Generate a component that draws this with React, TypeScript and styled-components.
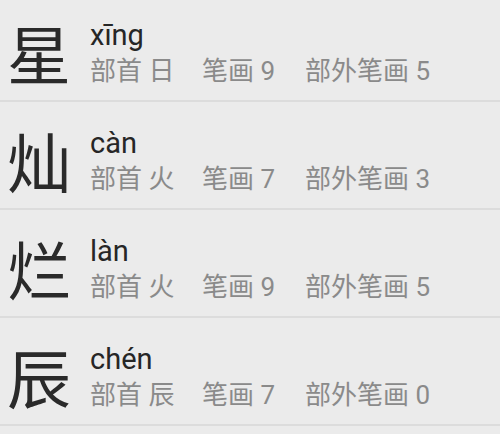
import React from "react";
import styled, { createGlobalStyle } from "styled-components";

const Global = createGlobalStyle`
  html, body { margin: 0; padding: 0; background: #ebebeb; }
  body { width: 500px; height: 434px; overflow: hidden; }
`;

const Viewport = styled.div`
  width: 500px;
  height: 434px;
  overflow: hidden;
  background: #ebebeb;
`;

const List = styled.ul`
  list-style: none;
  margin: -6px 0 0 0;
  padding: 0;
`;

const Row = styled.li`
  box-sizing: border-box;
  height: 108px;
  display: flex;
  align-items: flex-start;
  padding: 21px 0 0 7px;
  border-bottom: 2px solid #dcdcdc;
`;

const BigChar = styled.div`
  font-family: "Noto Sans CJK SC", sans-serif;
  font-size: 64px;
  line-height: 64px;
  height: 64px;
  margin-top: 4px;
  color: #2a2a2a;
  width: 83px;
  flex: none;
`;

const Info = styled.div`
  display: flex;
  flex-direction: column;
  gap: 4px;
  margin-top: 3px;
`;

const Pinyin = styled.div`
  font-family: Roboto, "Noto Sans", sans-serif;
  font-size: 29px;
  line-height: 34px;
  height: 34px;
  color: #262626;
`;

const Meta = styled.div`
  display: flex;
  font-size: 26px;
  line-height: 30px;
  height: 30px;
  color: #8a8a8a;
`;

const MetaItem = styled.span<{ $w: number }>`
  width: ${(p) => p.$w}px;
  flex: none;
  white-space: nowrap;
  font-family: Roboto, "Noto Sans CJK SC", sans-serif;
`;

const rows = [
  { ch: "星", py: "xīng", rad: "日", strokes: 9, extra: 5 },
  { ch: "灿", py: "càn", rad: "火", strokes: 7, extra: 3 },
  { ch: "烂", py: "làn", rad: "火", strokes: 9, extra: 5 },
  { ch: "辰", py: "chén", rad: "辰", strokes: 7, extra: 0 },
];

export default function App() {
  return (
    <Viewport>
      <Global />
      <List>
        {rows.map((r) => (
          <Row key={r.ch}>
            <BigChar>{r.ch}</BigChar>
            <Info>
              <Pinyin>{r.py}</Pinyin>
              <Meta>
                <MetaItem $w={112}>部首 {r.rad}</MetaItem>
                <MetaItem $w={103}>笔画 {r.strokes}</MetaItem>
                <MetaItem $w={140}>部外笔画 {r.extra}</MetaItem>
              </Meta>
            </Info>
          </Row>
        ))}
      </List>
    </Viewport>
  );
}
